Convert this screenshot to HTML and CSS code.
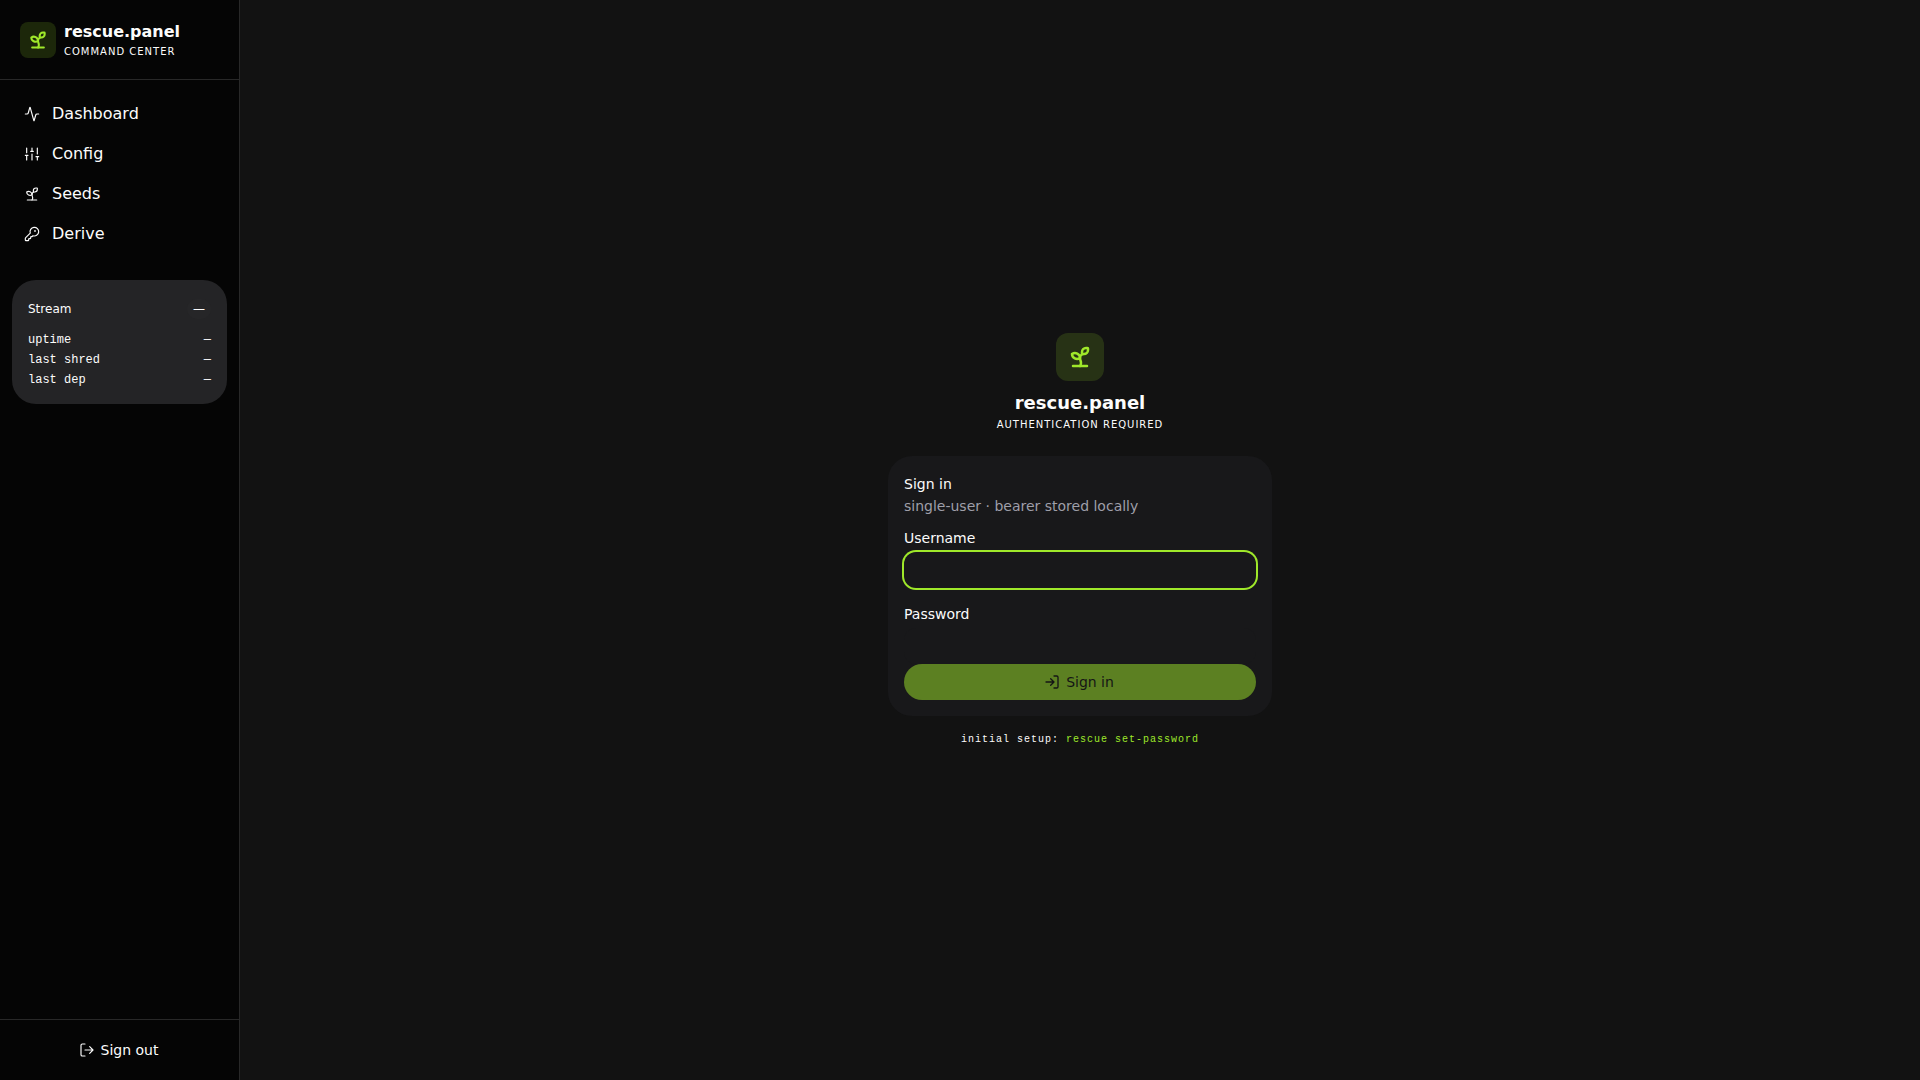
FILE: index.html
```html
<!DOCTYPE html>
<html lang="en">
  <head>
    <meta charset="utf-8">
    <meta name="viewport" content="width=device-width, initial-scale=1">
    <title>rescue.panel</title>
    <link rel="stylesheet" href="styles.css">
  </head>
  <body>
    <!-- shared icons -->
    <svg class="sprite" aria-hidden="true">
      <symbol id="sprout" viewBox="0 0 24 24">
        <path d="M14 9.536V7a4 4 0 0 1 4-4h1.5a.5.5 0 0 1 .5.5V5a4 4 0 0 1-4 4 4 4 0 0 0-4 4c0 2 1 3 1 5a5 5 0 0 1-1 3" />
        <path d="M4 9a5 5 0 0 1 8 4 5 5 0 0 1-8-4" />
        <path d="M5 21h14" />
      </symbol>
    </svg>

    <aside class="sidebar">
      <div class="brand">
        <div class="logo"><svg class="icon"><use href="#sprout" /></svg></div>
        <div>
          <div class="brand-name">rescue.panel</div>
          <div class="tagline">Command Center</div>
        </div>
      </div>

      <nav class="nav">
        <a href="#dashboard">
          <svg class="icon" viewBox="0 0 24 24"><path d="M22 12h-2.48a2 2 0 0 0-1.93 1.46l-2.35 8.36a.25.25 0 0 1-.48 0L9.24 2.18a.25.25 0 0 0-.48 0l-2.35 8.36A2 2 0 0 1 4.49 12H2" /></svg>
          Dashboard
        </a>
        <a href="#config">
          <svg class="icon" viewBox="0 0 24 24"><path d="M4 21v-7M4 10V3M12 21v-9M12 8V3M20 21v-5M20 12V3M2 14h4M10 8h4M18 16h4" /></svg>
          Config
        </a>
        <a href="#seeds">
          <svg class="icon"><use href="#sprout" /></svg>
          Seeds
        </a>
        <a href="#derive">
          <svg class="icon" viewBox="0 0 24 24"><path d="M2.586 17.414A2 2 0 0 0 2 18.828V21a1 1 0 0 0 1 1h3a1 1 0 0 0 1-1v-1a1 1 0 0 1 1-1h1a1 1 0 0 0 1-1v-1a1 1 0 0 1 1-1h.172a2 2 0 0 0 1.414-.586l.814-.814a6.5 6.5 0 1 0-4-4z" /><circle cx="16.5" cy="7.5" r=".5" /></svg>
          Derive
        </a>
      </nav>

      <section class="stream">
        <div class="stream-head">
          <span>Stream</span>
          <span class="chip">—</span>
        </div>
        <dl class="stats">
          <div><dt>uptime</dt><dd>—</dd></div>
          <div><dt>last shred</dt><dd>—</dd></div>
          <div><dt>last dep</dt><dd>—</dd></div>
        </dl>
      </section>

      <div class="sidebar-foot">
        <button class="btn" type="button">
          <svg class="icon" viewBox="0 0 24 24"><path d="M9 21H5a2 2 0 0 1-2-2V5a2 2 0 0 1 2-2h4M16 17l5-5-5-5M21 12H9" /></svg>
          Sign out
        </button>
      </div>
    </aside>

    <main class="content">
      <div class="login">
        <div class="login-head">
          <div class="logo logo-lg"><svg class="icon"><use href="#sprout" /></svg></div>
          <h1>rescue.panel</h1>
          <div class="tagline">Authentication required</div>
        </div>

        <form class="card">
          <h2>Sign in</h2>
          <p class="muted">single-user · bearer stored locally</p>
          <div class="field">
            <label for="username">Username</label>
            <input id="username" type="text" autofocus>
          </div>
          <div class="field">
            <label for="password">Password</label>
            <input id="password" type="password">
          </div>
          <button class="btn btn-primary" type="submit" disabled>
            <svg class="icon" viewBox="0 0 24 24"><path d="M15 3h4a2 2 0 0 1 2 2v14a2 2 0 0 1-2 2h-4M10 17l5-5-5-5M15 12H3" /></svg>
            Sign in
          </button>
        </form>

        <p class="hint">initial setup: <code>rescue set-password</code></p>
      </div>
    </main>
  </body>
</html>
```
FILE: styles.css
```css
* {
  box-sizing: border-box;
}
body {
  margin: 0;
  min-height: 100vh;
  display: flex;
  font-family: "DejaVu Sans", sans-serif;
  font-size: 14px;
  line-height: 20px;
  color: #fcfcfc;
  background: #121212;
}
h1,
h2,
p,
dl,
dd {
  margin: 0;
}
.sprite {
  display: none;
}
.icon {
  width: 16px;
  height: 16px;
  flex: none;
  fill: none;
  stroke: currentColor;
  stroke-width: 2;
  stroke-linecap: round;
  stroke-linejoin: round;
}

/* sidebar */
.sidebar {
  width: 240px;
  flex: none;
  display: flex;
  flex-direction: column;
  background: #050505;
  border-right: 1px solid #282828;
}
.brand {
  display: flex;
  align-items: center;
  gap: 8px;
  padding: 20px;
  border-bottom: 1px solid #282828;
}
.brand-name {
  font-size: 16px;
  line-height: 24px;
  font-weight: bold;
}
.logo {
  width: 36px;
  height: 36px;
  display: flex;
  align-items: center;
  justify-content: center;
  border-radius: 8px;
  color: #9fe82a;
  background: rgba(159, 232, 42, 0.15);
}
.logo .icon {
  width: 20px;
  height: 20px;
  stroke-width: 2.5;
}
.tagline {
  font-size: 10px;
  line-height: 15px;
  letter-spacing: 1px;
  text-transform: uppercase;
}
.nav {
  display: flex;
  flex-direction: column;
  gap: 4px;
  padding: 16px 12px;
}
.nav a {
  display: flex;
  align-items: center;
  gap: 12px;
  padding: 6px 12px;
  font-size: 16px;
  line-height: 24px;
  color: inherit;
  text-decoration: none;
}
.nav .icon,
.sidebar-foot .icon {
  stroke-width: 1.75;
}
.stream {
  margin: 12px;
  padding: 16px;
  border-radius: 24px;
  background: #242426;
  font-size: 12px;
}
.stream-head {
  display: flex;
  align-items: center;
  justify-content: space-between;
  margin-bottom: 10px;
  padding: 3px 0;
}
.chip {
  padding: 0 6px;
  border-radius: 12px;
  background: #262628;
}
.stats {
  display: flex;
  flex-direction: column;
  gap: 4px;
  font-family: "Liberation Mono", monospace;
  line-height: 16px;
}
.stats div {
  display: flex;
  justify-content: space-between;
}
.sidebar-foot {
  margin-top: auto;
  padding: 12px;
  border-top: 1px solid #282828;
}

/* buttons */
.btn {
  width: 100%;
  height: 36px;
  display: flex;
  align-items: center;
  justify-content: center;
  gap: 8px;
  border: none;
  border-radius: 18px;
  background: transparent;
  color: inherit;
  font: inherit;
  cursor: pointer;
}
.btn .icon {
  margin: 0 -2px;
}
.btn-primary {
  color: #121212;
  background: #9fe82a;
}
.btn:disabled {
  opacity: 0.5;
  cursor: default;
}

/* login */
.content {
  flex: 1;
  display: flex;
  align-items: center;
  justify-content: center;
  padding: 16px;
}
.login {
  width: 100%;
  max-width: 384px;
}
.login-head {
  display: flex;
  flex-direction: column;
  align-items: center;
  margin-bottom: 24px;
}
.login-head h1 {
  margin-top: 8px;
  font-size: 18px;
  line-height: 28px;
}
.logo-lg {
  width: 48px;
  height: 48px;
  border-radius: 12px;
}
.logo-lg .icon {
  width: 24px;
  height: 24px;
}
.card {
  padding: 16px;
  border-radius: 24px;
  background: #18181a;
}
.card h2 {
  font-size: 14px;
  line-height: 24px;
  font-weight: normal;
}
.muted {
  margin-bottom: 12px;
  color: #9f9fa9;
}
.field {
  display: flex;
  flex-direction: column;
  gap: 4px;
}
.field + .field {
  margin-top: 16px;
}
.field input {
  height: 36px;
  padding: 8px 12px;
  border: none;
  border-radius: 12px;
  outline: none;
  background: #18181a;
  color: inherit;
  font: inherit;
  caret-color: transparent;
}
.field input:focus {
  box-shadow: 0 0 0 2px #9fe82a;
}
.hint {
  margin-top: 16px;
  text-align: center;
  font-family: "Liberation Mono", monospace;
  font-size: 10px;
  line-height: 15px;
  letter-spacing: 1px;
}
.hint code {
  font: inherit;
  color: #9fe82a;
}
```
